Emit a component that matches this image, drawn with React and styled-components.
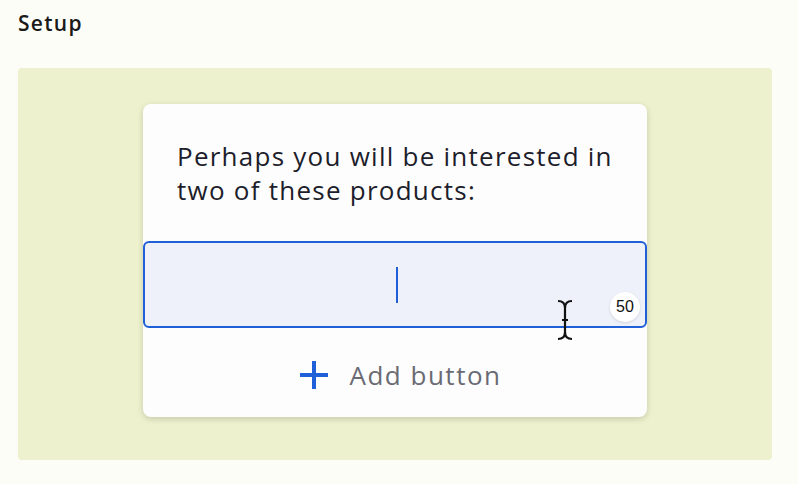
import React from 'react';
import styled, { createGlobalStyle } from 'styled-components';

const GlobalStyle = createGlobalStyle`
  html, body {
    margin: 0;
    padding: 0;
    background: #fdfdf7;
    font-family: "Open Sans", "Noto Sans", sans-serif;
  }
`;

const Page = styled.div`
  width: 798px;
  height: 484px;
  padding: 9px 26px 0 18px;
  box-sizing: border-box;
`;

const Title = styled.h2`
  margin: 0;
  font-size: 21px;
  font-weight: 600;
  color: #1a1a1a;
  line-height: 28px;
  letter-spacing: 1.3px;
`;

const Panel = styled.section`
  margin-top: 31px;
  height: 392px;
  background: #eef1cd;
  border-radius: 4px;
  display: flex;
  justify-content: center;
  padding-top: 36px;
  box-sizing: border-box;
`;

const Card = styled.div`
  width: 504px;
  height: 313px;
  background: #fdfdfe;
  border-radius: 8px;
  box-shadow: 0 2px 6px rgba(0, 0, 0, 0.16);
  display: flex;
  flex-direction: column;
`;

const Message = styled.p`
  margin: 0;
  padding: 35px 10px 0 34px;
  font-size: 26px;
  line-height: 34px;
  letter-spacing: 1.25px;
  color: #1d1d2b;
  height: 137px;
  box-sizing: border-box;
`;

const Field = styled.div`
  position: relative;
  height: 87px;
  border: 2px solid #1f5fd8;
  border-radius: 6px;
  background: #eef1f9;
  box-sizing: border-box;
  display: flex;
  justify-content: center;
  align-items: center;
`;

const Caret = styled.span`
  width: 2px;
  height: 36px;
  background: #1f5fd8;
  margin-left: 4px;
`;

const Counter = styled.span`
  position: absolute;
  right: 5px;
  bottom: 4px;
  width: 30px;
  height: 30px;
  border-radius: 50%;
  background: #fff;
  box-shadow: 0 1px 3px rgba(0, 0, 0, 0.12);
  display: flex;
  align-items: center;
  justify-content: center;
  font-family: "Liberation Sans", Arial, sans-serif;
  font-size: 16px;
  color: #111;
`;

const Pointer = styled.svg`
  position: absolute;
  left: 410px;
  top: 56px;
`;

const AddButton = styled.button`
  margin-top: 29px;
  align-self: center;
  border: none;
  background: none;
  display: flex;
  align-items: center;
  gap: 21px;
  font-family: inherit;
  font-size: 26px;
  letter-spacing: 1.5px;
  color: #6a6a72;
  padding: 0;
  margin-left: 10px;
`;

export default function App() {
  return (
    <Page>
      <GlobalStyle />
      <Title>Setup</Title>
      <Panel>
        <Card>
          <Message>
            Perhaps you will be interested in
            <br />
            two of these products:
          </Message>
          <Field>
            <Caret />
            <Pointer width="20" height="42" viewBox="0 0 20 42">
              <path
                d="M3 2 Q10 2 10 9 L10 33 Q10 40 3 40 M17 2 Q10 2 10 9 M10 33 Q10 40 17 40 M7 21 L13 21"
                fill="none"
                stroke="#111"
                strokeWidth="2.2"
              />
            </Pointer>
            <Counter>50</Counter>
          </Field>
          <AddButton>
            <svg width="30" height="30" viewBox="0 0 30 30">
              <path d="M15 1 V29 M1 15 H29" stroke="#1f5fd8" strokeWidth="4" />
            </svg>
            Add button
          </AddButton>
        </Card>
      </Panel>
    </Page>
  );
}
